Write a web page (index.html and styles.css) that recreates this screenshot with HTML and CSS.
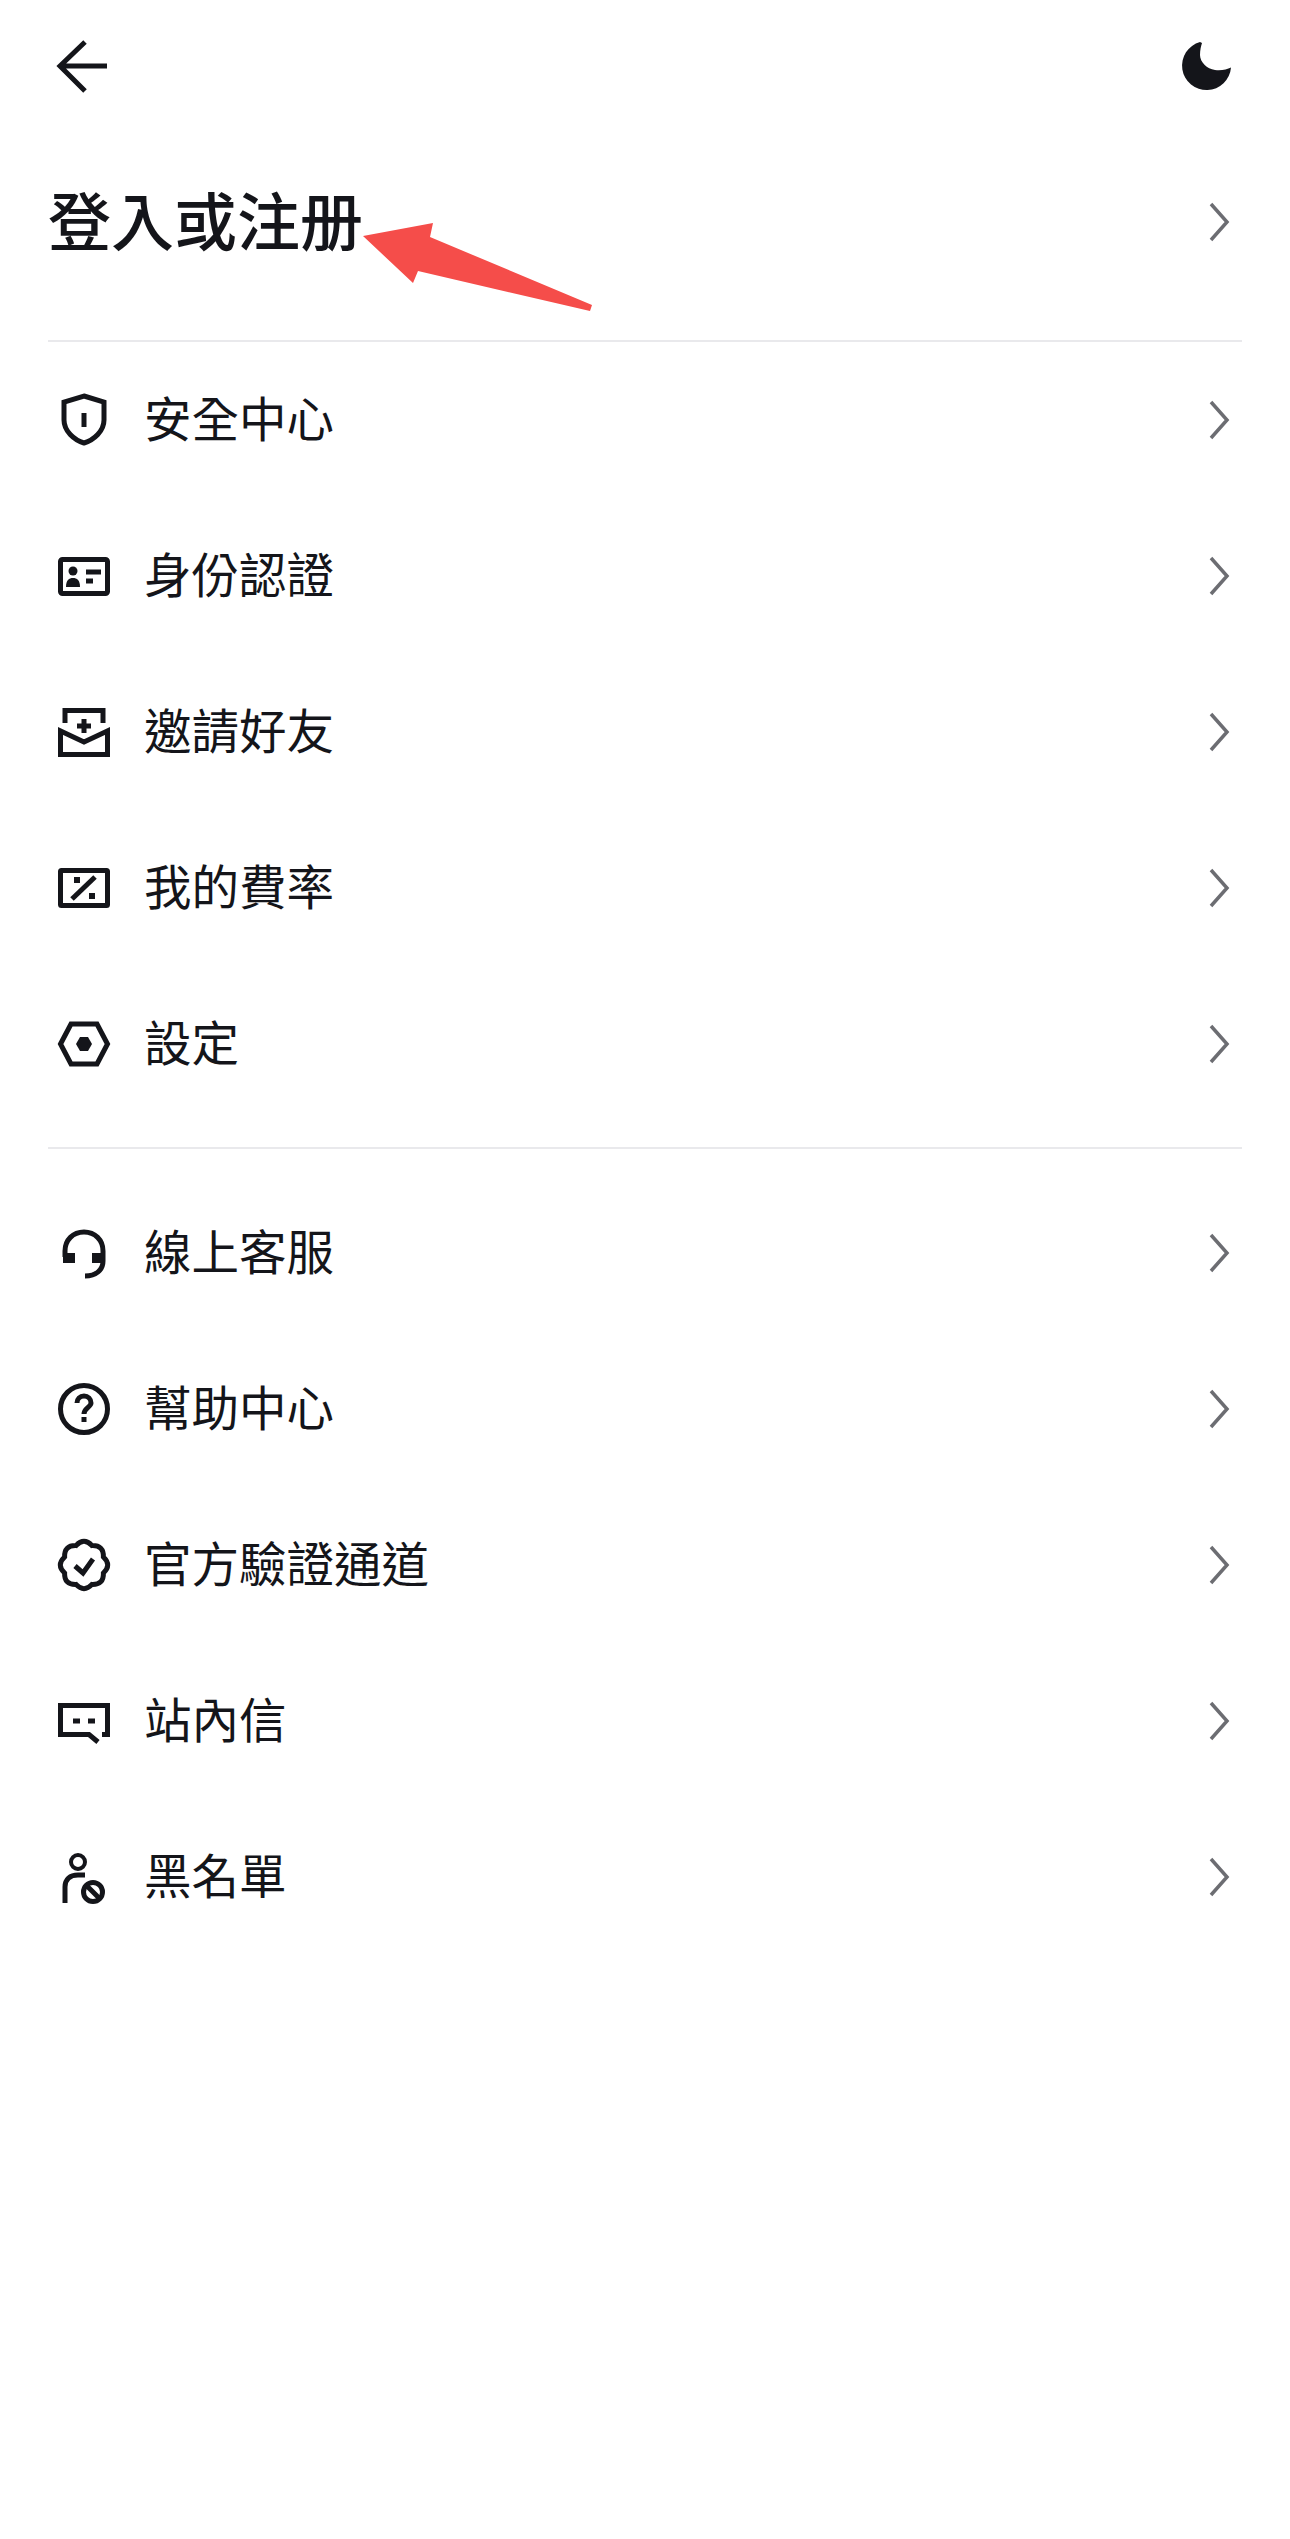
FILE: index.html
```html
<!DOCTYPE html>
<html lang="zh-Hant">
<head>
  <meta charset="utf-8">
  <title>帳戶</title>
  <link rel="stylesheet" href="styles.css">
</head>
<body>
  <div class="page">
    <div class="topbar">
      <svg class="icon" viewBox="0 0 56 56"><path class="line" d="M29 4 L4 28 L29 53 M4 28 H51"/></svg>
      <svg class="icon" viewBox="0 0 56 56"><path class="solid" d="M22 4 A24.5 24.5 0 1 0 53 29.5 C49 31.5 43 33 37 32 C29 31 22 24 22 17 C22 12 23 8 24 5 Z"/></svg>
    </div>

    <div class="login">
      <span class="login-title">登入或注册</span>
      <svg class="chevron" viewBox="0 0 24 40"><path d="M3 2 L19 20 L3 38"/></svg>
    </div>

    <!-- red annotation drawn over the screenshot -->
    <svg class="annotation" viewBox="0 0 240 100"><polygon points="3,16 73,3 70,17 232,85 230,91 58,51 53,63"/></svg>

    <ul class="menu">
      <li class="row">
        <svg class="icon" viewBox="0 0 56 56"><path class="line" d="M28 4 L48 10 V28 C48 39 38 48 28 51 C18 48 8 39 8 28 V10 Z M28 21 V35"/></svg>
        <span class="label">安全中心</span>
        <svg class="chevron" viewBox="0 0 24 40"><path d="M3 2 L19 20 L3 38"/></svg>
      </li>
      <li class="row">
        <svg class="icon" viewBox="0 0 56 56"><rect class="line" x="4.5" y="11.5" width="47" height="34" rx="2"/><circle class="solid" cx="17" cy="23" r="4.5"/><path class="solid" d="M10 39 C10 32 13 30 17 30 C21 30 24 32 24 39 Z"/><path class="line" d="M30 24 H45 M30 33 H37"/></svg>
        <span class="label">身份認證</span>
        <svg class="chevron" viewBox="0 0 24 40"><path d="M3 2 L19 20 L3 38"/></svg>
      </li>
      <li class="row">
        <svg class="icon" viewBox="0 0 56 56"><path class="line" d="M9 19 V6.5 H47 V19 M4.5 27 V50.5 H51.5 V27 L28 38 Z M28 15 V29 M21 22 H35"/></svg>
        <span class="label">邀請好友</span>
        <svg class="chevron" viewBox="0 0 24 40"><path d="M3 2 L19 20 L3 38"/></svg>
      </li>
      <li class="row">
        <svg class="icon" viewBox="0 0 56 56"><rect class="line" x="4.5" y="10.5" width="47" height="35" rx="1"/><path class="line" d="M16 39 L39 17"/><rect class="solid" x="18" y="17" width="6" height="6"/><rect class="solid" x="33" y="33" width="6" height="6"/></svg>
        <span class="label">我的費率</span>
        <svg class="chevron" viewBox="0 0 24 40"><path d="M3 2 L19 20 L3 38"/></svg>
      </li>
      <li class="row">
        <svg class="icon" viewBox="0 0 56 56"><polygon class="line" points="4.5,28 15,8 41,8 51.5,28 41,48 15,48"/><polygon class="solid" points="20,28 24,21 32,21 36,28 32,35 24,35"/></svg>
        <span class="label">設定</span>
        <svg class="chevron" viewBox="0 0 24 40"><path d="M3 2 L19 20 L3 38"/></svg>
      </li>
    </ul>

    <ul class="menu menu-second">
      <li class="row">
        <svg class="icon" viewBox="0 0 56 56"><path class="line" d="M9 32 V26 C9 15 17 7 28 7 C39 7 47 15 47 26 V36 C47 45 40 51 29 51"/><rect class="solid" x="7" y="28" width="12" height="10"/><rect class="solid" x="36" y="28" width="13" height="10"/></svg>
        <span class="label">線上客服</span>
        <svg class="chevron" viewBox="0 0 24 40"><path d="M3 2 L19 20 L3 38"/></svg>
      </li>
      <li class="row">
        <svg class="icon" viewBox="0 0 56 56"><circle class="line" cx="28" cy="28" r="23.5"/><path class="line" d="M21 22 C21 18 24 15 28 15 C32 15 35 18 35 22 C35 26 28 27 28 33"/><rect class="solid" x="25.5" y="36" width="5" height="5"/></svg>
        <span class="label">幫助中心</span>
        <svg class="chevron" viewBox="0 0 24 40"><path d="M3 2 L19 20 L3 38"/></svg>
      </li>
      <li class="row">
        <svg class="icon" viewBox="0 0 56 56"><path class="line" d="M20 8.6 Q28 0 36 8.6 Q47.8 8.2 47.4 20 Q56 28 47.4 36 Q47.8 47.8 36 47.4 Q28 56 20 47.4 Q8.2 47.8 8.6 36 Q0 28 8.6 20 Q8.2 8.2 20 8.6 Z M19 29 L27 36 L37 22"/></svg>
        <span class="label">官方驗證通道</span>
        <svg class="chevron" viewBox="0 0 24 40"><path d="M3 2 L19 20 L3 38"/></svg>
      </li>
      <li class="row">
        <svg class="icon" viewBox="0 0 56 56"><path class="line" d="M46 41.5 H51.5 V12.5 H4.5 V41.5 H33 L42 49 M17 28 H24 M32 28 H39"/></svg>
        <span class="label">站內信</span>
        <svg class="chevron" viewBox="0 0 24 40"><path d="M3 2 L19 20 L3 38"/></svg>
      </li>
      <li class="row">
        <svg class="icon" viewBox="0 0 56 56"><circle class="line thin" cx="22" cy="13" r="7"/><path class="line" d="M9 54 V38 C9 30 14 26 22 26 H29"/><circle class="line" cx="37" cy="43" r="9.5"/><path class="line" d="M31 37 L43 49"/></svg>
        <span class="label">黑名單</span>
        <svg class="chevron" viewBox="0 0 24 40"><path d="M3 2 L19 20 L3 38"/></svg>
      </li>
    </ul>
  </div>
</body>
</html>
```

FILE: styles.css
```css
* {
  box-sizing: border-box;
}

html, body {
  margin: 0;
  background: #fff;
}

body {
  font-family: "Noto Sans CJK TC", "Noto Sans", sans-serif;
  color: #14151a;
}

.page {
  position: relative;
  width: 1290px;
  height: 2539px;
  padding: 0 48px;
}

.topbar {
  height: 132px;
  display: flex;
  align-items: center;
  justify-content: space-between;
  padding: 0 8px;
}

.login {
  height: 210px;
  padding: 0 10px 29px 0;
  display: flex;
  align-items: center;
  justify-content: space-between;
  border-bottom: 2px solid #e9e9ec;
}

.login-title {
  font-size: 63px;
  line-height: 90px;
  font-weight: 500;
  margin-bottom: 8px;
}

.annotation {
  position: absolute;
  left: 360px;
  top: 220px;
  width: 240px;
  height: 100px;
}

.annotation polygon {
  fill: #f54d4a;
}

.menu {
  list-style: none;
  margin: 0;
  padding: 0 0 25px;
  border-bottom: 2px solid #e9e9ec;
}

.menu-second {
  padding: 26px 0 0;
  border-bottom: 0;
}

.row {
  height: 156px;
  display: flex;
  align-items: center;
  padding: 0 10px 0 8px;
}

.label {
  flex: 1;
  margin: 0 0 6px 32px;
  font-size: 47.5px;
  line-height: 64px;
}

.icon {
  width: 56px;
  height: 56px;
  flex: none;
}

.line {
  fill: none;
  stroke: #14151a;
  stroke-width: 5;
}

.thin {
  stroke-width: 4;
}

.solid {
  fill: #14151a;
}

.chevron {
  width: 24px;
  height: 40px;
  flex: none;
}

.chevron path {
  fill: none;
  stroke: #6c6d72;
  stroke-width: 3.5;
}
```
